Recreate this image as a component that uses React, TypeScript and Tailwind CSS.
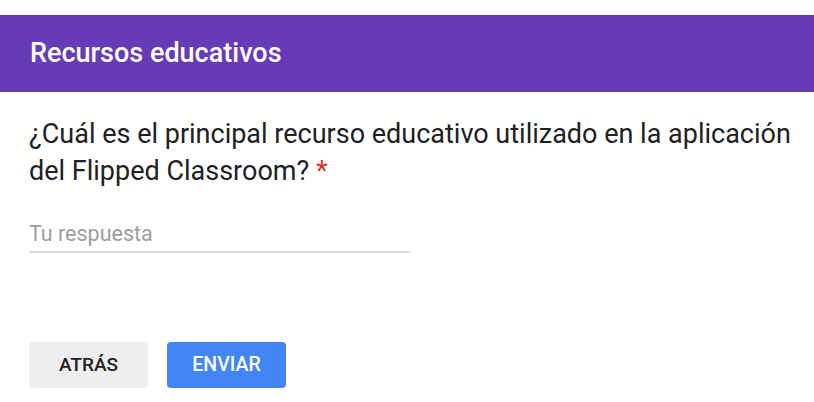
export default function App() {
  return (
    <div className="w-[814px] h-[402px] bg-white overflow-hidden font-['Roboto',sans-serif] pt-[15px]">
      <div className="h-[77px] bg-[#673ab7] flex items-center px-[30px]">
        <h1 className="text-white text-[27px] font-medium leading-none">Recursos educativos</h1>
      </div>

      <div className="px-[29px] pt-[24px]">
        <p className="w-[775px] text-[#202124] text-[27px] leading-[37px]">
          ¿Cuál es el principal recurso educativo utilizado en la aplicación del Flipped Classroom?{' '}
          <span className="text-[#d93025]">*</span>
        </p>

        <div className="w-[381px] mt-[29px] border-b-2 border-[#dadada] pb-[3px]">
          <input
            type="text"
            placeholder="Tu respuesta"
            className="w-full text-[21.5px] leading-[29px] text-[#202124] placeholder:text-[#9e9e9e] outline-none"
          />
        </div>

        <div className="flex gap-[19px] mt-[89px]">
          <button className="w-[119px] h-[46px] rounded-[4px] bg-[#eeeeee] text-[#202124] text-[19px] font-medium">
            ATRÁS
          </button>
          <button className="w-[119px] h-[46px] rounded-[4px] bg-[#4285f4] text-white text-[19.5px] font-medium">
            ENVIAR
          </button>
        </div>
      </div>
    </div>
  );
}
